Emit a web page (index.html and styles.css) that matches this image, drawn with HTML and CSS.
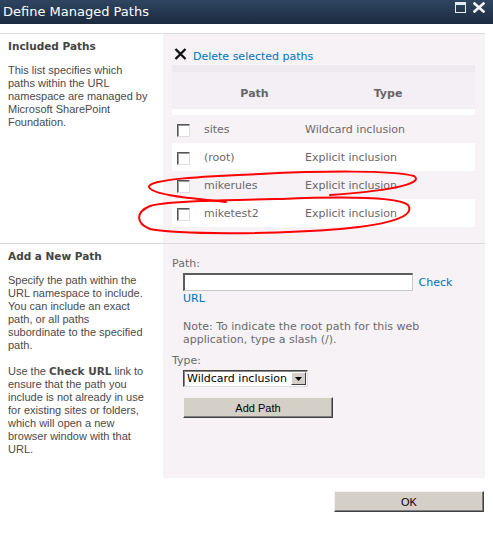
FILE: index.html
```html
<!DOCTYPE html>
<html lang="en">
<head>
  <meta charset="UTF-8" />
  <title>Define Managed Paths</title>
  <link rel="stylesheet" href="styles.css">
</head>
<body>
  <header class="titlebar">
    <h1>Define Managed Paths</h1>
    <div class="win-buttons">
      <svg width="11" height="11" viewBox="0 0 11 11"><rect x="0.5" y="0.5" width="10" height="10" fill="none" stroke="#e6ebf2" stroke-width="1"/><rect x="0" y="0" width="11" height="3" fill="#e6ebf2"/></svg>
      <svg width="12" height="11" viewBox="0 0 12 11"><path d="M1.5 1.5 L10.5 9.5 M10.5 1.5 L1.5 9.5" stroke="#f0f3f7" stroke-width="2.6" stroke-linecap="square"/></svg>
    </div>
  </header>

  <main class="dialog">
    <section class="row">
      <div class="desc">
        <h3>Included Paths</h3>
        <p>This list specifies which<br>paths within the URL<br>namespace are managed by<br>Microsoft SharePoint<br>Foundation.</p>
      </div>
      <div class="pane pane-list">
        <a class="delete-link" href="#">
          <svg width="13" height="12" viewBox="0 0 13 12"><path d="M1.5 1 L11.5 11 M11.5 1 L1.5 11" stroke="#111" stroke-width="2.4"/></svg>
          Delete selected paths
        </a>
        <div class="grid">
          <div class="thead">
            <span></span><span>Path</span><span>Type</span>
          </div>
          <div class="spacer"></div>
          <div class="trow">
            <span class="check"></span><span>sites</span><span>Wildcard inclusion</span>
          </div>
          <div class="trow alt">
            <span class="check"></span><span>(root)</span><span>Explicit inclusion</span>
          </div>
          <div class="trow">
            <span class="check"></span><span>mikerules</span><span>Explicit inclusion</span>
          </div>
          <div class="trow alt">
            <span class="check"></span><span>miketest2</span><span>Explicit inclusion</span>
          </div>
        </div>
      </div>
    </section>

    <section class="row">
      <div class="desc">
        <h3>Add a New Path</h3>
        <p>Specify the path within the<br>URL namespace to include.<br>You can include an exact<br>path, or all paths<br>subordinate to the specified<br>path.</p>
        <p>Use the <b>Check URL</b> link to<br>ensure that the path you<br>include is not already in use<br>for existing sites or folders,<br>which will open a new<br>browser window with that<br>URL.</p>
      </div>
      <div class="pane pane-form">
        <div class="label">Path:</div>
        <div class="indent">
          <input type="text" class="path-input" /> <a href="#">Check URL</a>
          <p class="note">Note: To indicate the root path for this web application, type a slash (/).</p>
        </div>
        <div class="label">Type:</div>
        <div class="indent">
          <div class="select">
            <span class="select-text">Wildcard inclusion</span>
            <span class="select-arrow"><svg width="7" height="4" viewBox="0 0 7 4"><path d="M0 0 H7 L3.5 4 Z" fill="#000"/></svg></span>
          </div>
          <button class="btn btn-add">Add Path</button>
        </div>
      </div>
    </section>

    <div class="footer">
      <button class="btn btn-ok">OK</button>
    </div>
  </main>

  <svg class="ink" width="493" height="534" viewBox="0 0 493 534">
    <path d="M226 202 C190 198 152 195 149 187 C147 180 200 176 260 174 C320 171 392 170 414 176 C423 182 402 190 330 195" />
    <path d="M282 199 C330 197 396 196 408 205 C415 215 396 224 340 229 C280 234 180 235 150 229 C135 223 136 212 150 206 C168 201 230 200 282 199" />
  </svg>
</body>
</html>
```

FILE: styles.css
```css
body {
  margin: 0;
  width: 493px;
  height: 534px;
  background: #fff;
  font-family: "Liberation Sans", Arial, sans-serif;
  position: relative;
  overflow: hidden;
}
.titlebar {
  height: 24px;
  background: linear-gradient(#2e4561, #1c2b3f);
  display: flex;
  align-items: flex-start;
  justify-content: space-between;
}
.titlebar h1 {
  margin: 0;
  padding: 4px 0 0 3px;
  font-family: "DejaVu Sans", sans-serif;
  font-weight: normal;
  font-size: 13px;
  color: #fff;
}
.win-buttons {
  display: flex;
  gap: 7px;
  padding: 2px 8px 0 0;
}
.dialog {
  width: 485px;
  padding-top: 9px;
}
.row {
  display: grid;
  grid-template-columns: 163px 322px;
  border-top: 1px solid #dcdcdc;
}
.desc {
  padding: 6px 8px;
  color: #4a4a4a;
  font-size: 11px;
  line-height: 13px;
}
.desc h3 {
  margin: 0;
  font-family: "DejaVu Sans", sans-serif;
  font-size: 10.5px;
  color: #444;
}
.desc p {
  margin: 11px 0 13px;
}
.desc b {
  font-family: "DejaVu Sans", sans-serif;
  font-size: 10.5px;
}
.pane {
  background: #f6f2f6;
  font-family: "DejaVu Sans", sans-serif;
  font-size: 11px;
  color: #6a6a6a;
}
a {
  color: #0072bc;
  text-decoration: none;
}
.pane-list {
  padding: 13px 10px 16px 9px;
}
.delete-link {
  display: flex;
  align-items: flex-end;
  gap: 6px;
  height: 16px;
  padding-left: 2px;
  margin-bottom: 2px;
}
.delete-link svg {
  margin-bottom: 3px;
}
.thead, .trow {
  display: grid;
  grid-template-columns: 32px 101px 1fr;
  align-items: center;
}
.thead {
  height: 44px;
  box-sizing: border-box;
  padding-top: 6px;
  border-top: 7px solid #eee9ef;
  background: #f4eff4;
  font-weight: bold;
  text-align: center;
  color: #666;
}
.thead span:nth-child(3) {
  padding-right: 4px;
}
.spacer {
  height: 6px;
  background: #fff;
}
.trow {
  height: 28px;
  padding-left: 5px;
  grid-template-columns: 27px 101px 1fr;
}
.trow.alt {
  background: #fff;
}
.check {
  width: 11px;
  height: 11px;
  margin-top: 2px;
  background: #fff;
  border: 1px solid;
  border-color: #555 #ddd #ddd #555;
  box-shadow: inset 1px 1px #999;
}
.pane-form {
  padding: 13px 15px 0 9px;
  height: 221px;
}
.label {
  line-height: 13px;
}
.indent {
  padding-left: 11px;
}
.path-input {
  width: 230px;
  height: 18px;
  box-sizing: border-box;
  margin: 3px 2px 0 0;
  border: 1px solid #c8c8c8;
  border-top: 2px solid #5c5c5c;
  border-left: 2px solid #5c5c5c;
  vertical-align: bottom;
}
.indent a {
  line-height: 16px;
}
.note {
  margin: 13px 0 8px;
  line-height: 13px;
}
.select {
  display: inline-flex;
  align-items: center;
  margin-top: 3px;
  height: 17px;
  box-sizing: border-box;
  background: #fff;
  border: 1px solid;
  border-color: #444 #ddd #ddd #444;
  box-shadow: inset 1px 1px #888;
  color: #000;
  padding: 0 1px 0 3px;
}
.select-text {
  margin-right: 4px;
}
.select-arrow {
  width: 13px;
  height: 11px;
  background: #d4d0c8;
  border: 1px solid;
  border-color: #fff #404040 #404040 #fff;
  display: flex;
  align-items: center;
  justify-content: center;
}
.btn {
  display: block;
  height: 21px;
  background: #d4d0c8;
  border: 1px solid;
  border-color: #f4f3ef #404040 #404040 #f4f3ef;
  box-shadow: inset -1px -1px #808080;
  font-family: "Liberation Sans", Arial, sans-serif;
  font-size: 11px;
  color: #000;
  padding: 0;
}
.btn-add {
  width: 150px;
  margin-top: 10px;
}
.footer {
  display: flex;
  justify-content: flex-end;
  padding: 13px 1px 0 0;
}
.btn-ok {
  width: 150px;
}
.ink {
  position: absolute;
  top: 0;
  left: 0;
  pointer-events: none;
}
.ink path {
  fill: none;
  stroke: #f00;
  stroke-width: 2;
  stroke-linecap: round;
}
```
